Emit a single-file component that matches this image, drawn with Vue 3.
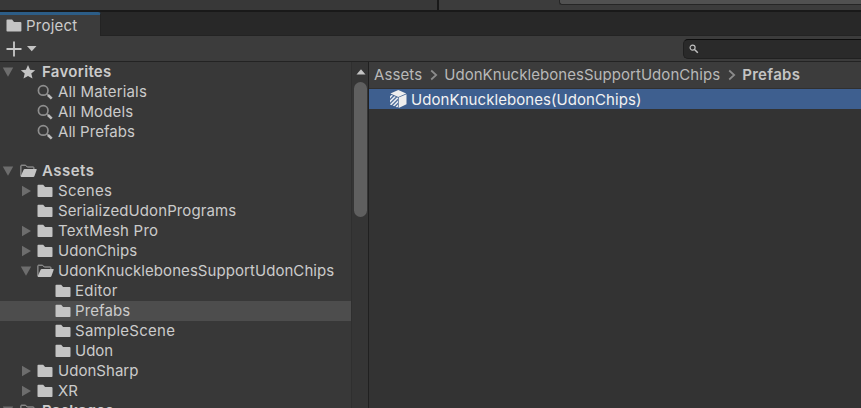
<script setup>
const rows = [
  { label: 'Favorites', icon: 'star', depth: 0, arrow: 'down', bold: true, tracking: 0.3 },
  { label: 'All Materials', icon: 'search', depth: 1, tracking: 0.17 },
  { label: 'All Models', icon: 'search', depth: 1, tracking: 0.14 },
  { label: 'All Prefabs', icon: 'search', depth: 1, tracking: 0.06 },
  { label: 'Assets', icon: 'open', depth: 0, arrow: 'down', bold: true, spaced: true, tracking: 0.48 },
  { label: 'Scenes', icon: 'folder', depth: 1, arrow: 'right', tracking: 0.28 },
  { label: 'SerializedUdonPrograms', icon: 'folder', depth: 1, tracking: 0.1 },
  { label: 'TextMesh Pro', icon: 'folder', depth: 1, arrow: 'right', tracking: 0.22 },
  { label: 'UdonChips', icon: 'folder', depth: 1, arrow: 'right', tracking: 0.04 },
  { label: 'UdonKnucklebonesSupportUdonChips', icon: 'open', depth: 1, arrow: 'down', tracking: 0.06 },
  { label: 'Editor', icon: 'folder', depth: 2, tracking: 0.22 },
  { label: 'Prefabs', icon: 'folder', depth: 2, selected: true, tracking: 0.1 },
  { label: 'SampleScene', icon: 'folder', depth: 2, tracking: 0.27 },
  { label: 'Udon', icon: 'folder', depth: 2, tracking: 0 },
  { label: 'UdonSharp', icon: 'folder', depth: 1, arrow: 'right', tracking: 0.03 },
  { label: 'XR', icon: 'folder', depth: 1, arrow: 'right', tracking: 0.1 },
  { label: 'Packages', icon: 'open', depth: 0, arrow: 'down', bold: true, tracking: 0.15 },
]
</script>

<template>
  <div class="editor">
    <div class="upper">
      <div class="upper-left"></div>
      <div class="upper-right"><div class="upper-field"></div></div>
    </div>
    <div class="tabs">
      <div class="tab">
        <svg class="tab-icon" width="16" height="14" viewBox="0 0 16 14"><path d="M.5 1.3q0-.8.8-.8h4.8L8 3h6.5q.9 0 .9.9v7.8q0 .8-.8.8H1.3q-.8 0-.8-.8z" fill="#c4c4c4" /></svg>
        <span class="tab-label">Project</span>
      </div>
    </div>
    <div class="toolbar">
      <svg class="add" width="32" height="18" viewBox="0 0 32 18">
        <path d="M8 1.5v15M.5 9h15" stroke="#c8c8c8" stroke-width="1.8" />
        <path d="M21 6h9.5l-4.75 5.3z" fill="#c4c4c4" />
      </svg>
      <div class="search">
        <svg width="10" height="10" viewBox="0 0 10 10" fill="none" stroke="#c0c0c0"><circle cx="3.6" cy="3.6" r="2.5" stroke-width="1.2" /><path d="M5.5 5.5l3.3 3.3" stroke-width="1.5" /></svg>
      </div>
    </div>
    <div class="body">
      <div class="tree">
        <div v-for="row in rows" :key="row.label" class="row" :class="['depth-' + row.depth, { bold: row.bold, selected: row.selected, spaced: row.spaced }]">
          <svg class="arrow" width="12" height="12" viewBox="0 0 12 12" fill="#6d6d6d">
            <path v-if="row.arrow === 'down'" d="M.8 1.5h10.4L6 10.7z" />
            <path v-else-if="row.arrow === 'right'" d="M2 .8v10.4L11 6z" />
          </svg>
          <svg class="icon" width="18" height="18" viewBox="0 0 18 18">
            <path v-if="row.icon === 'folder'" d="M1.5 3.6q0-.8.8-.8h4.9L9.1 5h6.5q.9 0 .9.9v8.4q0 .8-.8.8H2.3q-.8 0-.8-.8z" fill="#c4c4c4" />
            <template v-else-if="row.icon === 'open'">
              <path d="M1.9 14V3.7q0-.5.5-.5h4.2L8.3 5h6q.6 0 .6.6V8" fill="none" stroke="#aaa" stroke-width="1" />
              <path d="M5.8 7h11.3q.9 0 .6.8l-2.3 6.5q-.3.8-1.1.8H2.3q-.9 0-.6-.8L4.6 7.8q.3-.8 1.2-.8z" fill="#c4c4c4" />
            </template>
            <path v-else-if="row.icon === 'star'" d="M9 2l2.1 4.7 5.1.5-3.9 3.4 1.2 5L9 12.9l-4.5 2.7 1.2-5-3.9-3.4 5.1-.5z" fill="#c4c4c4" />
            <template v-else>
              <circle cx="7.2" cy="7.4" r="4.8" fill="none" stroke="#8e8e8e" stroke-width="1.7" />
              <path d="M10.8 10.8l1.4 1.4" stroke="#8e8e8e" stroke-width="1.4" />
              <path d="M12 12l3.7 3.7" stroke="#bcbcbc" stroke-width="2.6" />
            </template>
          </svg>
          <span class="label" :style="{ letterSpacing: row.tracking + 'px' }">{{ row.label }}</span>
        </div>
      </div>
      <div class="scrollbar">
        <svg width="10" height="6" viewBox="0 0 10 6"><path d="M.5 5.5h9L5 .2z" fill="#c4c4c4" /></svg>
        <div class="thumb"></div>
      </div>
      <div class="content">
        <div class="crumbs">
          <span class="crumb-root">Assets</span>
          <svg width="8" height="12" viewBox="0 0 8 12"><path d="M1.2 1.5L6.2 6l-5 4.5" fill="none" stroke="#8c8c8c" stroke-width="1.7" /></svg>
          <span class="crumb-parent">UdonKnucklebonesSupportUdonChips</span>
          <svg width="8" height="12" viewBox="0 0 8 12"><path d="M1.2 1.5L6.2 6l-5 4.5" fill="none" stroke="#8c8c8c" stroke-width="1.7" /></svg>
          <span class="crumb-current">Prefabs</span>
        </div>
        <div class="asset">
          <svg width="18" height="18" viewBox="0 0 18 18">
            <clipPath id="prefab-left-face"><path d="M1 4.3l8 3.4v10L1 14.4z" /></clipPath>
            <path d="M9.3 0L17.2 3.4 9.3 6.9 1.4 3.4zM9.7 7.6l7.8-3.4v10L9.7 17.9z" fill="#eee" />
            <path clip-path="url(#prefab-left-face)" d="M0 8.5l5-5M0 12.5l9-9M0 16.5l10-10M2 18.5l8-8M6 18.5l5-5" fill="none" stroke="#dfe4ec" stroke-width="1.6" />
          </svg>
          <span class="asset-label">UdonKnucklebones(UdonChips)</span>
        </div>
      </div>
    </div>
  </div>
</template>

<style>
body { margin: 0; overflow: hidden; }
</style>
<style scoped>
.editor { width: 861px; height: 408px; overflow: hidden; display: flex; flex-direction: column; background: #383838; color: #cbcbcb; font: 15px/20px Inter, sans-serif; letter-spacing: .3px; }
.editor svg { display: block; flex: none; }
.editor span { white-space: nowrap; }
.upper { height: 10px; flex: none; display: flex; border-bottom: 2px solid #191919; }
.upper-left { width: 437px; border-right: 2px solid #191919; background: #383838; }
.upper-right { flex: 1; background: #3c3c3c; }
.upper-field { height: 4px; margin-left: 120px; background: #515151; border: solid #262626; border-width: 0 0 1px 1px; border-bottom-left-radius: 3px; }
.tabs { height: 24px; flex: none; background: #282828; display: flex; box-shadow: inset 0 -1px #232323; }
.tab { width: 101px; box-sizing: border-box; border-top: 3px solid #2c5d87; border-top-right-radius: 3px; background: #3c3c3c; border-right: 1px solid #232323; display: flex; align-items: center; padding-left: 6px; }
.tab-label { margin-left: 4px; letter-spacing: .22px; }
.toolbar { height: 25px; flex: none; display: flex; align-items: center; background: #3c3c3c; border-bottom: 1px solid #232323; }
.add { margin-left: 6px; }
.search { width: 178px; height: 20px; box-sizing: border-box; margin-left: auto; padding-left: 5px; display: flex; align-items: center; background: #2a2a2a; border: solid #202020; border-width: 1px 0 1px 1px; border-top-color: #0d0d0d; border-radius: 5px 0 0 5px; }
.body { flex: 1; min-height: 0; display: flex; }
.tree { width: 351px; flex: none; overflow: hidden; }
.row { height: 20px; display: flex; align-items: center; }
.depth-0 { padding-left: 2px; }
.depth-1 { padding-left: 20px; }
.depth-2 { padding-left: 38px; }
.icon { margin-left: 4px; }
.depth-0 .icon { margin-left: 5px; }
.label { margin-left: 4px; }
.depth-0 .label { margin-left: 5px; }
.depth-2 .label { margin-left: 3px; }
.bold { font-weight: 600; }
.spaced { margin-top: 19px; }
.selected { background: #4d4d4d; }
.scrollbar { width: 16px; flex: none; border: solid #2f2f2f; border-width: 0 1px; border-right-color: #202020; background: #353535; display: flex; flex-direction: column; align-items: center; padding-top: 7px; }
.scrollbar svg { margin-left: 1px; }
.thumb { width: 13px; height: 135px; margin: 7px 0 0 1px; border-radius: 7px; background: #5f5f5f; }
.content { flex: 1; min-width: 0; background: #333; }
.crumbs { height: 26px; display: flex; align-items: center; padding-left: 5px; background: #3c3c3c; border-bottom: 1px solid #303030; color: #b8b8b8; }
.crumbs svg { margin: 0 6px 0 8px; }
.crumb-root { letter-spacing: .1px; }
.crumb-parent { letter-spacing: .05px; }
.crumb-current { font-weight: 600; color: #c4c4c4; letter-spacing: .33px; }
.asset { height: 20px; display: flex; align-items: center; padding-left: 20px; background: #3e5f8f; color: #f2f2f2; }
.asset-label { margin-left: 4px; padding-top: 2px; letter-spacing: .07px; }
</style>
